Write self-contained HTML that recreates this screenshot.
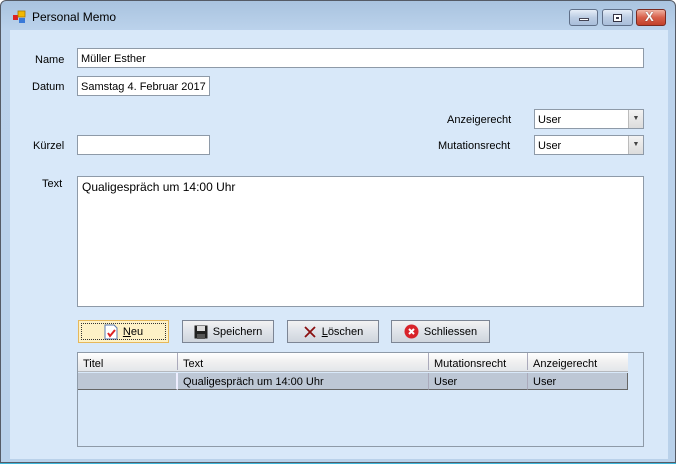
<!DOCTYPE html>
<html><head><meta charset="utf-8"><style>
*{margin:0;padding:0;box-sizing:border-box}
body{width:676px;height:468px;overflow:hidden;background:#fff;font-family:"Liberation Sans",sans-serif;font-size:11px;color:#000;position:relative}
.a{position:absolute}
.frame{left:0;top:0;width:676px;height:463px;background:linear-gradient(#a9c3df,#bcd3ec 30px,#b9d1ea);border:1px solid #555b66;border-radius:6px 6px 0 0}
.client{left:10px;top:30px;width:658px;height:429px;background:#d8e8f9}
.lbl{font-size:11px;color:#000}
.tb{background:#fff;border:1px solid #8e9aa8;height:20px;padding:4px 0 0 3px;font-size:11px}
.btn{height:23px;border:1px solid #7c8594;background:linear-gradient(#f2f2f2,#dfe3e9 50%,#cfd5dd);font-size:11px;display:flex;align-items:center;justify-content:center;gap:5px}
.wb{top:9px;height:17px;border:1px solid #5f6f88;border-radius:3px;background:linear-gradient(#e6eef8,#bccde3 50%,#a9bedb)}
.cell{position:absolute;top:0;height:17px;padding:2px 0 0 5px;border-right:1px solid #aab;}
</style></head><body>
<div class="a frame"></div>
<div class="a" style="left:13px;top:10px;width:14px;height:14px">
<svg width="14" height="14"><rect x="0" y="5" width="5" height="5" fill="#d22"/><rect x="5" y="1" width="7" height="6" fill="#f2b800" stroke="#a70" stroke-width=".8"/><rect x="6" y="8" width="6" height="5" fill="#3a7ad8"/></svg></div>
<div class="a" style="left:32px;top:10px;font-size:12px">Personal Memo</div>
<div class="a wb" style="left:569px;width:29px"><div class="a" style="left:9px;top:8px;width:10px;height:3px;background:#fff;border:1px solid #445"></div></div>
<div class="a wb" style="left:602px;width:31px"><div class="a" style="left:10px;top:4px;width:9px;height:8px;border:1px solid #334;background:#fff"><div style="margin:2px;width:3px;height:2px;border:1px solid #334"></div></div></div>
<div class="a wb" style="left:636px;width:30px;border-color:#7a2a20;background:linear-gradient(#f0b2a2,#d8604a 50%,#c2412b)"><div class="a" style="left:8px;top:-1px;color:#fff;font-weight:bold;font-size:13px;text-shadow:0 0 1px #333">X</div></div>
<div class="a client"></div>

<div class="a lbl" style="left:35px;top:54px">Name</div>
<div class="a tb" style="left:77px;top:48px;width:567px">Müller Esther</div>
<div class="a lbl" style="left:32px;top:81px">Datum</div>
<div class="a tb" style="left:77px;top:76px;width:133px">Samstag 4. Februar 2017</div>

<div class="a lbl" style="left:447px;top:114px">Anzeigerecht</div>
<div class="a tb" style="left:534px;top:109px;width:110px">User</div>
<div class="a" style="left:628px;top:110px;width:15px;height:18px;background:linear-gradient(#f3f3f3,#dcdcdc);border-left:1px solid #bbb;font-size:7px;text-align:center;line-height:18px;color:#444">▼</div>
<div class="a lbl" style="left:438px;top:140px">Mutationsrecht</div>
<div class="a tb" style="left:534px;top:135px;width:110px">User</div>
<div class="a" style="left:628px;top:136px;width:15px;height:18px;background:linear-gradient(#f3f3f3,#dcdcdc);border-left:1px solid #bbb;font-size:7px;text-align:center;line-height:18px;color:#444">▼</div>

<div class="a lbl" style="left:33px;top:140px">Kürzel</div>
<div class="a tb" style="left:77px;top:135px;width:133px"></div>

<div class="a lbl" style="left:42px;top:178px">Text</div>
<div class="a" style="left:77px;top:176px;width:567px;height:131px;background:#fff;border:1px solid #8e9aa8;padding:3px 0 0 4px;font-size:12px">Qualigespräch um 14:00 Uhr</div>

<div class="a btn" style="left:78px;top:320px;width:91px;border-color:#e6b85a;background:#fdf1c6"><div class="a" style="left:2px;top:2px;right:2px;bottom:2px;border:1px dotted #333"></div>
<svg width="14" height="16"><path d="M1 1h9l3 3v11H1z" fill="#fff" stroke="#5a7ab0"/><path d="M4 9l2 3 5-6" stroke="#d22" stroke-width="2" fill="none"/></svg><span><u>N</u>eu</span></div>
<div class="a btn" style="left:182px;top:320px;width:92px"><svg width="14" height="14"><rect x="0.5" y="0.5" width="13" height="13" fill="#222"/><rect x="3" y="1" width="8" height="5" fill="#ddd"/><rect x="3" y="9" width="8" height="5" fill="#555"/></svg><span>Speichern</span></div>
<div class="a btn" style="left:287px;top:320px;width:92px"><svg width="14" height="14"><path d="M2 2l10 10M12 2L2 12" stroke="#8b1010" stroke-width="1.8"/></svg><span><u>L</u>öschen</span></div>
<div class="a btn" style="left:391px;top:320px;width:99px"><svg width="15" height="15"><circle cx="7.5" cy="7.5" r="7" fill="#d8232a"/><path d="M5 5l5 5M10 5l-5 5" stroke="#fff" stroke-width="2"/></svg><span>Schliessen</span></div>

<div class="a" style="left:77px;top:352px;width:567px;height:95px;background:#d8e8f9;border:1px solid #8e9aa8">
 <div class="a" style="left:0;top:0;width:550px;height:19px;background:linear-gradient(#fff,#f0f0f0 50%,#e3e6ea);border-bottom:1px solid #b5b8bd">
  <div class="cell" style="left:0;width:100px;padding-top:5px">Titel</div>
  <div class="cell" style="left:100px;width:251px;padding-top:5px">Text</div>
  <div class="cell" style="left:351px;width:99px;padding-top:5px">Mutationsrecht</div>
  <div class="cell" style="left:450px;width:100px;border:none;padding-top:5px">Anzeigerecht</div>
 </div>
 <div class="a" style="left:0;top:20px;width:550px;height:17px;background:#bdc7d5">
  <div class="cell" style="left:0;width:100px;border-right:2px solid #eef;border-bottom:1px solid #666"></div>
  <div class="cell" style="left:100px;width:251px;padding-top:3px;border-bottom:1px solid #666">Qualigespräch um 14:00 Uhr</div>
  <div class="cell" style="left:351px;width:99px;padding-top:3px;border-bottom:1px solid #666">User</div>
  <div class="cell" style="left:450px;width:100px;padding-top:3px;border-bottom:1px solid #666;border-right:1px solid #666">User</div>
 </div>
</div>
<div class="a" style="left:0;top:463px;width:676px;height:5px;background:#fff;border-top:1px solid #3bb4d8"></div>
</body></html>
